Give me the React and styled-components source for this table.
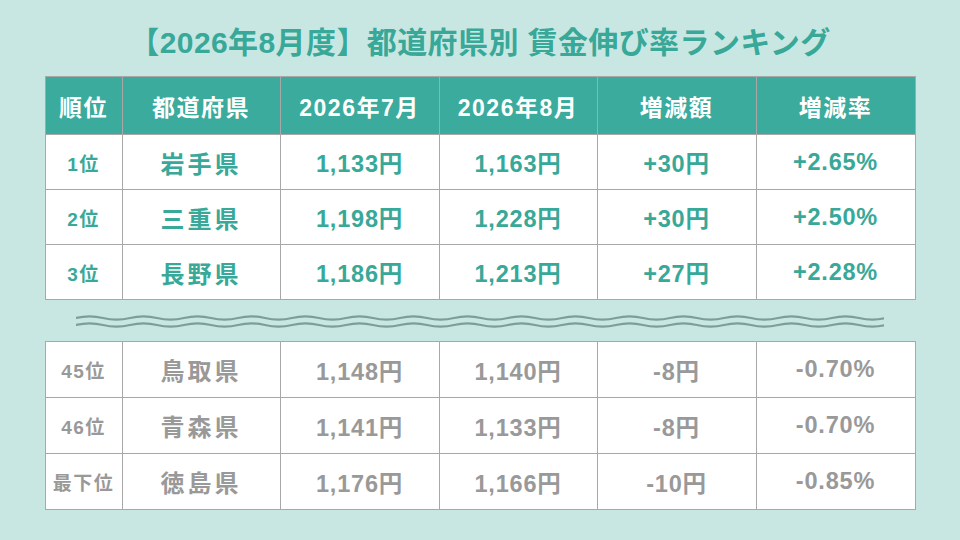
import React from 'react';
import styled, { createGlobalStyle } from 'styled-components';

const colors = {
  page: '#c8e7e2',
  teal: '#38a898',
  header: '#3bab9d',
  muted: '#999999',
  border: '#a8a8a8',
  wave: '#7c9e99',
};

const GlobalStyle = createGlobalStyle`
  html, body {
    margin: 0;
    padding: 0;
    background: ${colors.page};
  }
  body {
    font-family: "Liberation Sans", "Noto Sans CJK JP", "Noto Sans", sans-serif;
  }
`;

const Page = styled.div`
  width: 960px;
  height: 540px;
  overflow: hidden;
  display: flex;
  flex-direction: column;
  align-items: center;
  padding-top: 25px;
  box-sizing: border-box;
`;

const Title = styled.h1`
  margin: 0 0 15px;
  font-size: 30px;
  line-height: 36px;
  font-weight: 700;
  color: ${colors.teal};
  letter-spacing: 0.4px;
  white-space: nowrap;
`;

const Table = styled.table`
  width: 870px;
  table-layout: fixed;
  border-collapse: collapse;
  background: #fff;
`;

const HeadRow = styled.tr`
  height: 58px;
  background: ${colors.header};
`;

const Row = styled.tr`
  height: ${p => p.$height}px;
`;

const HeadCell = styled.th`
  border: 1px solid ${colors.border};
  color: #fff;
  font-size: 23px;
  font-weight: 700;
  letter-spacing: 1.5px;
  text-align: center;
  vertical-align: middle;
  padding: 0;
`;

const fontSizes = { rank: '19px', name: '24px', num: '23.5px' };
const spacing = { rank: '1.5px', name: '3px', num: '0.8px' };

const Cell = styled.td`
  border: 1px solid ${colors.border};
  color: ${p => (p.$muted ? colors.muted : colors.teal)};
  font-size: ${p => fontSizes[p.$kind]};
  letter-spacing: ${p => spacing[p.$kind]};
  font-weight: 700;
  text-align: center;
  vertical-align: middle;
  padding: 0;
  white-space: nowrap;
`;

const Divider = styled.div`
  width: 808px;
  height: 41px;
  display: flex;
  align-items: center;
`;

const columns = [77, 158, 159, 158, 159, 159];
const headers = ['順位', '都道府県', '2026年7月', '2026年8月', '増減額', '増減率'];

const top = [
  ['1位', '岩手県', '1,133円', '1,163円', '+30円', '+2.65%'],
  ['2位', '三重県', '1,198円', '1,228円', '+30円', '+2.50%'],
  ['3位', '長野県', '1,186円', '1,213円', '+27円', '+2.28%'],
];

const bottom = [
  ['45位', '鳥取県', '1,148円', '1,140円', '-8円', '-0.70%'],
  ['46位', '青森県', '1,141円', '1,133円', '-8円', '-0.70%'],
  ['最下位', '徳島県', '1,176円', '1,166円', '-10円', '-0.85%'],
];

const kindOf = i => (i === 0 ? 'rank' : i === 1 ? 'name' : 'num');

// one wavy line, built from half periods
const wavePath = (y, width, period, amp) => {
  const half = period / 2;
  let d = `M0 ${y} q ${half / 2} ${-amp * 2} ${half} 0`;
  for (let x = half; x < width; x += half) d += ` t ${half} 0`;
  return d;
};

const Wave = () => (
  <svg width="808" height="20" viewBox="0 0 808 20">
    <g fill="none" stroke={colors.wave} strokeWidth="2.3" strokeLinecap="round">
      <path d={wavePath(7, 806, 54, 1.6)} />
      <path d={wavePath(14, 806, 54, 1.6)} />
    </g>
  </svg>
);

const RankTable = ({ rows, muted, header, rowHeight }) => (
  <Table>
    <colgroup>
      {columns.map((w, i) => (
        <col key={i} style={{ width: w }} />
      ))}
    </colgroup>
    <tbody>
      {header && (
        <HeadRow>
          {headers.map(h => (
            <HeadCell key={h}>{h}</HeadCell>
          ))}
        </HeadRow>
      )}
      {rows.map(r => (
        <Row key={r[0]} $height={rowHeight}>
          {r.map((v, i) => (
            <Cell key={i} $kind={kindOf(i)} $muted={muted}>
              {v}
            </Cell>
          ))}
        </Row>
      ))}
    </tbody>
  </Table>
);

const App = () => (
  <>
    <GlobalStyle />
    <Page>
      <Title>【2026年8月度】都道府県別 賃金伸び率ランキング</Title>
      <RankTable rows={top} header rowHeight={55} />
      <Divider>
        <Wave />
      </Divider>
      <RankTable rows={bottom} muted rowHeight={56} />
    </Page>
  </>
);

export default App;
